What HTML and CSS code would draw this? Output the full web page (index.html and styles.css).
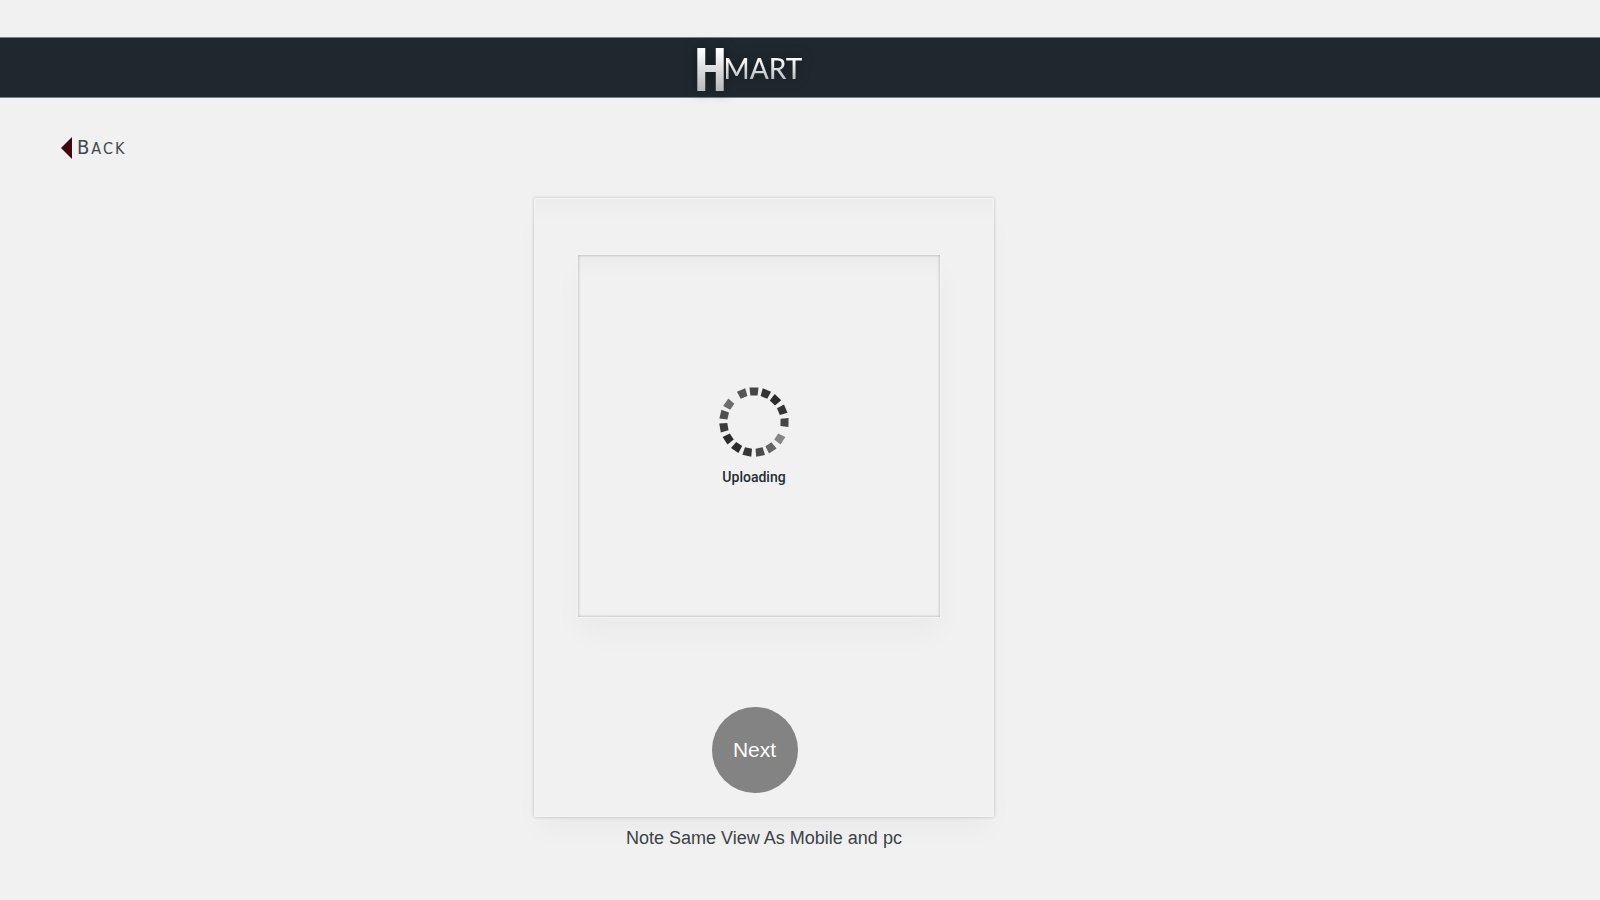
FILE: index.html
```html
<!DOCTYPE html>
<html lang="en">
<head>
<meta charset="utf-8">
<meta name="viewport" content="width=device-width, initial-scale=1">
<title>Hmart - Uploading</title>
<link rel="stylesheet" href="styles.css">
</head>
<body>
<header class="topbar">
  <div class="logo"><span class="logo-initial">H</span><span class="logo-rest">MART</span></div>
</header>
<nav class="crumbs">
  <a class="back" href="#">
    <svg class="back-arrow" width="11" height="22" viewBox="0 0 11 22" aria-hidden="true"><path d="M11 0V22L0 11Z" fill="#43050f"/></svg>
    <span class="back-label"><span class="back-initial">B</span>ACK</span>
  </a>
</nav>
<main class="stage">
  <section class="card">
    <div class="dropzone" role="status">
      <svg class="spinner" width="70" height="70" viewBox="-35 -35 70 70" aria-hidden="true">
        <defs><path id="seg" d="M-4.500 -34.500H4.500L3.600 -26.500H-3.600Z"/></defs>
        <use href="#seg" fill="#454545"/>
        <use href="#seg" fill="#343434" transform="rotate(22)"/>
        <use href="#seg" fill="#2b2b2b" transform="rotate(44)"/>
        <use href="#seg" fill="#353535" transform="rotate(67)"/>
        <use href="#seg" fill="#454545" transform="rotate(91)"/>
        <use href="#seg" fill="#858585" transform="rotate(123)"/>
        <use href="#seg" fill="#656565" transform="rotate(147)"/>
        <use href="#seg" fill="#4b4b4b" transform="rotate(169)"/>
        <use href="#seg" fill="#363636" transform="rotate(192)"/>
        <use href="#seg" fill="#2c2c2c" transform="rotate(214)"/>
        <use href="#seg" fill="#2c2c2c" transform="rotate(237)"/>
        <use href="#seg" fill="#3c3c3c" transform="rotate(260)"/>
        <use href="#seg" fill="#505050" transform="rotate(283)"/>
        <use href="#seg" fill="#6c6c6c" transform="rotate(305)"/>
        <use href="#seg" fill="#555" transform="rotate(338)"/>
      </svg>
      <p class="status">Uploading</p>
    </div>
    <button class="next" type="button">Next</button>
  </section>
  <p class="note">Note Same View As Mobile and pc</p>
</main>
</body>
</html>
```
FILE: styles.css
```css
* { box-sizing: border-box; }

body {
  margin: 0;
  padding-top: 37px;
  min-height: 100vh;
  background: #f1f1f1;
  color: #3b4247;
  font-family: "Liberation Sans", Arial, sans-serif;
}

p { margin: 0; }

.topbar {
  display: flex;
  justify-content: center;
  height: 61px;
  padding-right: 104px;
  background: #20282f;
  border-top: 1px solid #7b8185;
  border-bottom: 1px solid #7b8185;
}

.logo {
  display: flex;
  align-items: center;
  filter: drop-shadow(0 0 6px #10191c);
}

.logo-initial,
.logo-rest {
  background: linear-gradient(#ffffff 20%, #b9bbbd 85%);
  background-clip: text;
  -webkit-background-clip: text;
  color: transparent;
}

.logo-initial {
  margin-right: -4px;
  font: bold 60px/60px "Open Sans Condensed", "DejaVu Sans Condensed", sans-serif;
}

.logo-rest {
  font: 500 28px/34px Lato, sans-serif;
}

.crumbs {
  display: flex;
  padding: 36px 61px 0;
}

.back {
  display: flex;
  align-items: center;
  gap: 5px;
  height: 28px;
  color: #42494b;
  text-decoration: none;
}

.back-label {
  font: 16px/28px "DejaVu Sans Condensed", "DejaVu Sans", sans-serif;
  letter-spacing: 2px;
}

.back-initial { font-size: 20px; }

.stage {
  display: flex;
  flex-direction: column;
  align-items: center;
  padding: 36px 72px 0 0;
}

.card {
  display: flex;
  flex-direction: column;
  align-items: center;
  width: 100%;
  max-width: 460px;
  padding: 57px 54px 24px 44px;
  border-radius: 2px;
  box-shadow:
    0 0 3px rgba(0, 0, 0, .26),
    0 16px 28px -6px rgba(0, 0, 0, .04),
    inset 0 0 0 1px #f5f5f5,
    inset 0 24px 24px -16px rgba(0, 0, 0, .03);
  background: #f1f1f1;
}

.dropzone {
  display: flex;
  flex-direction: column;
  align-items: center;
  justify-content: center;
  gap: 10px;
  width: 100%;
  aspect-ratio: 1;
  padding: 2px 10px 0 0;
  box-shadow:
    0 0 0 1px #f5f5f5,
    0 16px 28px rgba(0, 0, 0, .03),
    inset 0 0 3px rgba(0, 0, 0, .32),
    inset 0 24px 24px -16px rgba(0, 0, 0, .03);
}

.status {
  color: #242d34;
  font: 500 14px/20px Roboto, sans-serif;
}

.next {
  width: 86px;
  height: 86px;
  margin: 90px 9px 0 0;
  padding: 0;
  border: 0;
  border-radius: 50%;
  background: #838383;
  color: #fff;
  font: 21px/24px "Liberation Sans", Arial, sans-serif;
}

.note {
  margin-top: 9px;
  font-size: 18px;
  line-height: 24px;
}
```
